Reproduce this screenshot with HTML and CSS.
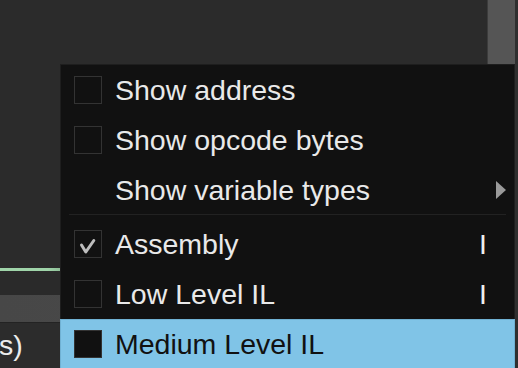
FILE: index.html
```html
<!DOCTYPE html>
<html lang="en">
<head>
    <meta charset="UTF-8">
    <meta name="viewport" content="width=device-width, initial-scale=1.0">
    <title>View Options</title>
    <link rel="stylesheet" href="styles.css">
</head>
<body>
    <div class="app">
        <div class="pane">
            <div class="code"></div>
            <div class="progress"></div>
            <div class="spacer"></div>
            <div class="tabbar"></div>
            <div class="status"><span class="status-text">s)</span></div>
        </div>
        <div class="scrollbar">
            <div class="thumb"></div>
        </div>

        <div class="menu">
            <div class="item">
                <span class="check"></span>
                <span class="label">Show address</span>
            </div>
            <div class="item">
                <span class="check"></span>
                <span class="label">Show opcode bytes</span>
            </div>
            <div class="item">
                <span class="check blank"></span>
                <span class="label">Show variable types</span>
                <span class="arrow"></span>
            </div>
            <div class="separator"></div>
            <div class="item">
                <span class="check">
                    <svg width="26" height="26" viewBox="0 0 26 26">
                        <path d="M6.5 14 L10.8 21 L18.8 9.5" fill="none" stroke="#bdbdbd" stroke-width="3" stroke-linecap="round" stroke-linejoin="round"/>
                    </svg>
                </span>
                <span class="label">Assembly</span>
                <span class="shortcut">I</span>
            </div>
            <div class="item">
                <span class="check"></span>
                <span class="label">Low Level IL</span>
                <span class="shortcut">I</span>
            </div>
            <div class="item active">
                <span class="check"></span>
                <span class="label">Medium Level IL</span>
            </div>
        </div>
    </div>
</body>
</html>
```

FILE: styles.css
```css
body {
    margin: 0;
    padding: 0;
    background-color: #2b2b2b;
    font-family: "Liberation Sans", Arial, sans-serif;
    overflow: hidden;
}

.app {
    position: relative;
    display: flex;
    width: 518px;
    height: 368px;
}

.pane {
    flex: 1;
    display: flex;
    flex-direction: column;
}

.code {
    height: 268px;
    background-color: #2b2b2b;
}

.progress {
    height: 3px;
    width: 60px;
    background: linear-gradient(to right, #9fd4a9 80%, #8fbf98);
}

.spacer {
    height: 24px;
    background-color: #2a2a2a;
}

.tabbar {
    height: 27px;
    background: linear-gradient(to right, #474747, #4c4c4c);
    border-bottom: 1px solid #232323;
}

.status {
    flex: 1;
    background-color: #2c2c2c;
    color: #ececec;
    font-size: 28.5px;
    line-height: 44px;
}

.status-text {
    display: block;
    margin-left: -1px;
}

.scrollbar {
    width: 31px;
    background-color: #2f2f2f;
    display: flex;
    flex-direction: column;
}

.thumb {
    width: 27px;
    height: 64px;
    background-color: #555;
    border-left: 1px solid #3c3c3c;
}

/* popup menu */
.menu {
    position: absolute;
    left: 60px;
    top: 64px;
    width: 453px;
    padding-bottom: 10px;
    background-color: #111;
    border: 1px solid #1e1e1e;
}

.item {
    display: flex;
    align-items: center;
    height: 50px;
    padding-left: 13px;
    padding-right: 27px;
    color: #e9e9e9;
    font-size: 28.5px;
}

.check {
    width: 26px;
    height: 26px;
    border: 1px solid #333;
    background-color: #111;
    margin-right: 13px;
    flex-shrink: 0;
}

.check svg {
    display: block;
}

.check.blank {
    border-color: transparent;
    background: none;
}

.label {
    flex: 1;
    white-space: nowrap;
}

.shortcut {
    color: #f0f0f0;
}

.arrow {
    width: 0;
    height: 0;
    border-left: 10px solid #9a9a9a;
    border-top: 9.5px solid transparent;
    border-bottom: 9.5px solid transparent;
    margin-right: -19px;
}

.separator {
    height: 1px;
    background-color: #222;
    margin: -1px 8px 4px 8px;
}

.item.active {
    background-color: #80c4e7;
    color: #111;
    margin: 0 -1px;
    padding-left: 13px;
    border: 1px solid #70b1d3;
    height: 48px;
}
```
